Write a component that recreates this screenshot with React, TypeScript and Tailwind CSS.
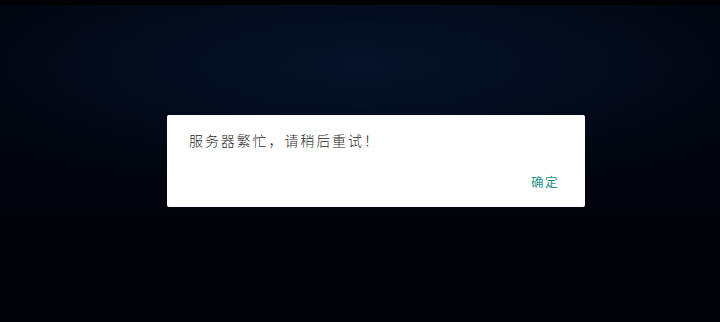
import React from 'react';

// Dark blurred backdrop with a centred "server busy" alert dialog.
export default function App() {
  return (
    <div
      className="relative w-[720px] h-[322px] overflow-hidden bg-[#01040c]"
      style={{ fontFamily: '"Noto Sans CJK SC", "Noto Sans", sans-serif' }}
    >
      {/* backdrop */}
      <div className="absolute inset-0 bg-[radial-gradient(ellipse_65%_40%_at_50%_20%,#06122a_0%,#030b1c_50%,#01040c_100%)]" />
      <div className="absolute inset-x-0 top-0 h-[5px] bg-[#010204]" />
      <div className="absolute inset-x-0 bottom-0 h-[120px] bg-gradient-to-b from-transparent to-[#010208]" />

      <div className="relative flex h-full items-start justify-center pt-[115px] pl-[32px]">
        <div className="w-[418px] h-[92px] bg-white rounded-[2px] flex flex-col">
          <p className="pl-[22px] pt-[14px] text-[14px] leading-[22px] tracking-[1.9px] text-[#2a2a2a] font-light">
            服务器繁忙，请稍后重试！
          </p>
          <div className="flex justify-end pr-[26px] mt-auto pb-[16px]">
            <button className="text-[12.5px] leading-[18px] tracking-[1.5px] text-[#1f8f8c]">确定</button>
          </div>
        </div>
      </div>
    </div>
  );
}
